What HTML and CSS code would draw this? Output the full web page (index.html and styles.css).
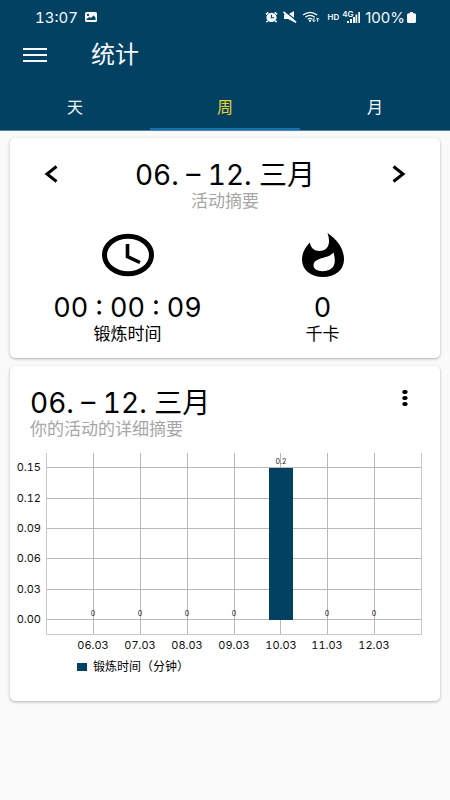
FILE: index.html
```html
<!DOCTYPE html>
<html lang="zh-CN">
<head>
<meta charset="utf-8">
<meta name="viewport" content="width=device-width, initial-scale=1">
<title>统计</title>
<link rel="stylesheet" href="styles.css">
</head>
<body>
<header class="header">
  <div class="status">
    <div class="status-group">
      <span>13:07</span>
      <svg width="12" height="10" viewBox="0 0 12 10" aria-hidden="true"><path fill="currentColor" fill-rule="evenodd" d="M1.500 0h9A1.500 1.500 0 0 1 12 1.500v7A1.500 1.500 0 0 1 10.500 10h-9A1.500 1.500 0 0 1 0 8.500v-7A1.500 1.500 0 0 1 1.500 0zM1.500 8h9V5.500L8.500 3.500 6 6 4.500 5 1.500 7zM3 1.800a1.100 1.100 0 1 0 .01 0z"/></svg>
    </div>
    <div class="status-group status-right">
      <svg width="13" height="12" viewBox="0 0 14 12" aria-hidden="true"><path fill="currentColor" fill-rule="evenodd" d="M7 1.500a5.500 5 0 1 0 .01 0zM6.300 3.500h1.200v2.700h2.200v1.200H6.300z"/><path d="M1 3.200 3.600 1M13 3.200 10.400 1M3 10l-1.500 1.500M11 10l1.500 1.500" stroke="currentColor" stroke-width="1.600"/></svg>
      <svg width="14" height="12" viewBox="0 0 14 12" aria-hidden="true"><path fill="currentColor" d="M1 3.500h4L11 0v11L5 8H1z"/><path d="M1.500 0 14 10" stroke="#034163" stroke-width="1.300"/><path d="M.5 1 13 11.500" stroke="currentColor" stroke-width="1.700"/></svg>
      <svg class="wifi" width="18" height="12" viewBox="0 0 19 12" aria-hidden="true"><g fill="none" stroke="currentColor" stroke-width="1.300"><path d="M1 4Q8.500-2 16 4M3.500 6.300q5-4 10 0M6 8.500q2.500-2 5 0"/><path d="M12.500 7v4M11 9.500l1.500 1.500 1.500-1.500M16.500 11V7M15 8.500l1.500-1.500 1.500 1.500" stroke-width="1"/></g><circle cx="8.500" cy="10" r="1.200" fill="currentColor"/></svg>
      <span class="hd">HD</span>
      <span class="signal"><span class="net">4G</span><svg width="16" height="12" viewBox="0 0 16 12" aria-hidden="true"><path fill="currentColor" d="M3 10h2v2H3zM6 8h2v4H6zM9 6h2v6H9zM11.500 3.500h1.700V12h-1.700zM14.300 1H16v11h-1.700z"/></svg></span>
      <span class="percent">100%</span>
      <svg width="9" height="11" viewBox="0 0 9 11" aria-hidden="true"><path fill="currentColor" d="M3 0h3v1.200h1.500A1.500 1.500 0 0 1 9 2.700v6.800A1.500 1.500 0 0 1 7.500 11h-6A1.500 1.500 0 0 1 0 9.500V2.700a1.500 1.500 0 0 1 1.500-1.500H3z"/></svg>
    </div>
  </div>
  <div class="appbar">
    <button class="icon-button" type="button" aria-label="菜单"><svg width="24" height="14" viewBox="0 0 24 14"><path fill="currentColor" d="M0 0h24v2H0zM0 6h24v2H0zM0 12h24v2H0z"/></svg></button>
    <h1>统计</h1>
  </div>
  <nav class="tabs">
    <button type="button" class="tab">天</button>
    <button type="button" class="tab active">周</button>
    <button type="button" class="tab">月</button>
  </nav>
</header>
<main class="content">
  <section class="card summary">
    <div class="period">
      <button class="icon-button" type="button" aria-label="上一周"><svg width="14" height="18" viewBox="0 0 14 18"><path d="M12.500 1.500 3 9l9.500 7.500" fill="none" stroke="currentColor" stroke-width="3"/></svg></button>
      <div class="heading">
        <h2>06. – 12. 三月</h2>
        <p>活动摘要</p>
      </div>
      <button class="icon-button" type="button" aria-label="下一周"><svg width="14" height="18" viewBox="0 0 14 18"><path d="M1.500 1.500 11 9l-9.500 7.500" fill="none" stroke="currentColor" stroke-width="3"/></svg></button>
    </div>
    <div class="stats">
      <div class="stat">
        <svg width="54" height="44" viewBox="0 0 54 44" aria-hidden="true"><ellipse cx="27" cy="22" rx="23.500" ry="18.800" fill="none" stroke="currentColor" stroke-width="5"/><path d="M26.500 11v12.500L39 29.500" fill="none" stroke="currentColor" stroke-width="3.600"/></svg>
        <strong>00 : 00 : 09</strong>
        <span>锻炼时间</span>
      </div>
      <div class="stat">
        <svg width="42" height="44" viewBox="0 0 42 44" aria-hidden="true"><path fill="currentColor" fill-rule="evenodd" d="M25.500 0C36 7 42 16 42 26.500 42 37 33 44 21 44S0 37 0 26.500C0 20.500 3 14 8 9.500c.3 5 4.500 8.500 9.500 8.500 6 0 9.500-4 9.500-9.500 0-3-.5-5.500-1.500-8.500zM31.500 19.500c-3 3.500-7 4.500-11 5.500-5.500 1.300-9 3.500-9 7.500 0 3.500 4 5.700 9 5.700 7 0 12.300-3.700 12.300-10 0-3-.4-6-1.300-8.700z"/></svg>
        <strong>0</strong>
        <span>千卡</span>
      </div>
    </div>
  </section>
  <section class="card details">
    <div class="details-head">
      <div class="heading">
        <h2>06. – 12. 三月</h2>
        <p>你的活动的详细摘要</p>
      </div>
      <button class="icon-button" type="button" aria-label="更多"><svg width="6" height="16" viewBox="0 0 6 16"><g fill="currentColor"><ellipse cx="3" cy="2" rx="2.700" ry="2.100"/><ellipse cx="3" cy="8" rx="2.700" ry="2.100"/><ellipse cx="3" cy="14" rx="2.700" ry="2.100"/></g></svg></button>
    </div>
    <svg class="chart" viewBox="0 0 430 205" role="img" aria-label="锻炼时间（分钟）">
      <path class="grid" d="M36 16.500h375M36 47.500h375M36 77.500h375M36 107.500h375M36 138.500h375M36 168.500h375M83.500 2v182M130.500 2v182M177.500 2v182M224.500 2v182M270.500 2v182M317.500 2v182M364.500 2v182"/>
      <path class="frame" d="M36.500 2v181.500h375V2"/>
      <path class="bar" d="M259 17h24v152h-24z"/>
      <g class="axis axis-y">
        <text x="31" y="20">0.15</text><text x="31" y="51">0.12</text><text x="31" y="81">0.09</text><text x="31" y="111">0.06</text><text x="31" y="142">0.03</text><text x="31" y="172">0.00</text>
      </g>
      <g class="axis">
        <text x="83" y="198">06.03</text><text x="130" y="198">07.03</text><text x="177" y="198">08.03</text><text x="224" y="198">09.03</text><text x="271" y="198">10.03</text><text x="317" y="198">11.03</text><text x="364" y="198">12.03</text>
      </g>
      <g class="values">
        <text x="83" y="165">0</text><text x="130" y="165">0</text><text x="177" y="165">0</text><text x="224" y="165">0</text><text x="271" y="13">0.2</text><text x="317" y="165">0</text><text x="364" y="165">0</text>
      </g>
    </svg>
    <div class="legend"><i class="swatch"></i><span>锻炼时间（分钟）</span></div>
  </section>
</main>
</body>
</html>
```
FILE: styles.css
```css
* { box-sizing: border-box; }

body {
  margin: 0;
  background: #f9faf9;
  color: #000;
  font-family: Inter, "Noto Sans CJK SC", sans-serif;
  font-variant-numeric: tabular-nums;
}

h1, h2, p { margin: 0; font-weight: 400; }
svg { display: block; flex: none; }

button {
  padding: 0;
  border: 0;
  background: none;
  color: inherit;
  font: inherit;
}

.icon-button {
  display: flex;
  align-items: center;
  justify-content: center;
  width: 42px;
  height: 32px;
}

.header {
  background: #034163;
  color: #f4f8fa;
  border-bottom: 1px solid #5580a0;
}

.status {
  display: flex;
  justify-content: space-between;
  align-items: center;
  height: 34px;
  padding: 0 34px 0 35px;
  font-size: 15px;
}

.status-group { display: flex; align-items: center; gap: 7px; }
.status-right { gap: 5px; font-variant-numeric: normal; }
.wifi { margin-right: 2px; }
.hd { font-size: 8px; font-weight: 600; }
.signal { display: flex; position: relative; }
.net { position: absolute; top: -1px; left: -2px; font-size: 8px; line-height: 8px; font-weight: 600; }
.percent { margin-right: -3px; }

.appbar {
  display: flex;
  align-items: center;
  gap: 35px;
  height: 42px;
  padding: 0 14px;
}

.appbar h1 { font-size: 24px; line-height: 32px; }

.tabs { display: flex; height: 54px; }

.tab {
  flex: 1;
  padding-top: 7px;
  border-bottom: 2px solid transparent;
  font-size: 16px;
}

.tab.active { color: #e8d22e; border-color: #0f75b0; }

.content {
  display: flex;
  flex-direction: column;
  gap: 8px;
  padding: 7px 10px;
}

.card {
  background: #fff;
  border-radius: 5px;
  box-shadow: 0 1px 3px rgba(0, 0, 0, 0.3);
}

.summary { padding: 20px 20px 15px; }
.period { display: flex; justify-content: space-between; }
.period .heading { text-align: center; }
.heading h2 { font-size: 28px; line-height: 34px; }
.heading p { color: #a6a6a6; font-size: 17px; line-height: 18px; }

.stats { display: flex; margin-top: 23px; }

.stat {
  flex: 1;
  display: flex;
  flex-direction: column;
  align-items: center;
}

.stat strong { margin-top: 14px; font-size: 27px; font-weight: 400; line-height: 34px; }
.stat span { font-size: 17px; line-height: 18px; }

.details { padding: 20px 0 26px; }

.details-head {
  display: flex;
  justify-content: space-between;
  padding: 0 14px 0 20px;
}

.details-head .icon-button { margin-top: -4px; }

.chart { width: 100%; height: auto; margin-top: 13px; }
.grid { fill: none; stroke: #b8b8b8; }
.frame { fill: none; stroke: #c8c8c8; }
.bar { fill: #034163; }
.axis { font-size: 11px; fill: #111; text-anchor: middle; }
.axis-y { text-anchor: end; }
.values { font-size: 7px; fill: #222; text-anchor: middle; }

.legend {
  display: flex;
  align-items: center;
  gap: 6px;
  margin-top: 3px;
  padding-left: 67px;
  font-size: 12px;
  line-height: 16px;
}

.swatch { width: 10px; height: 8px; background: #034163; }
```
